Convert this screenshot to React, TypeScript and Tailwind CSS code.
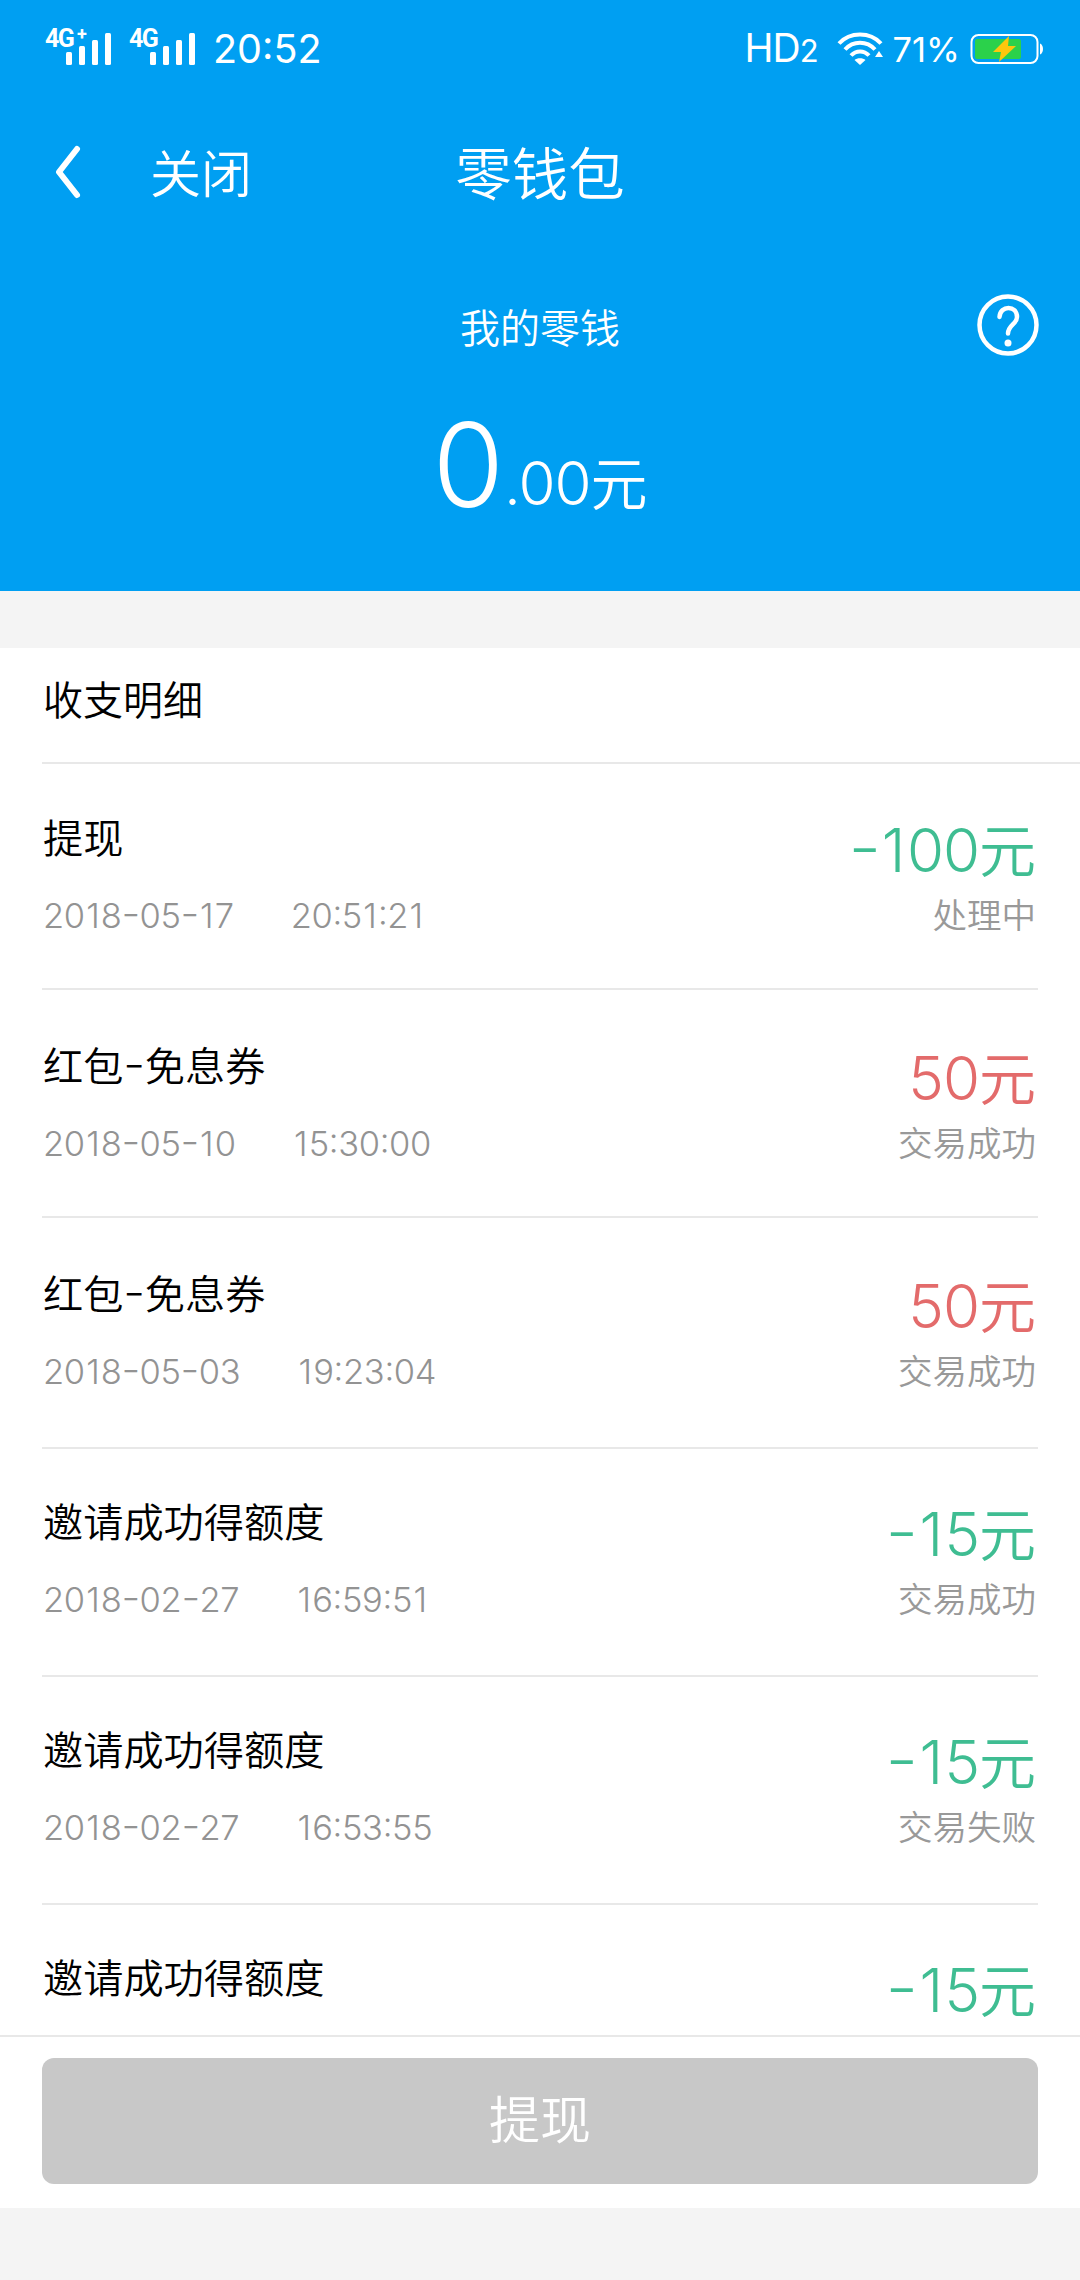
import { clsx } from "clsx";

interface RecordItem {
    title: string;
    date?: string;
    time?: string;
    amount: string;
    status?: string;
}

const records: RecordItem[] = [
    { title: "提现", date: "2018-05-17", time: "20:51:21", amount: "-100", status: "处理中" },
    { title: "红包-免息券", date: "2018-05-10", time: "15:30:00", amount: "50", status: "交易成功" },
    { title: "红包-免息券", date: "2018-05-03", time: "19:23:04", amount: "50", status: "交易成功" },
    { title: "邀请成功得额度", date: "2018-02-27", time: "16:59:51", amount: "-15", status: "交易成功" },
    { title: "邀请成功得额度", date: "2018-02-27", time: "16:53:55", amount: "-15", status: "交易失败" },
    { title: "邀请成功得额度", amount: "-15" },
];

// row heights alternate a little, the text keeps an even 228px rhythm
const rowSizes = [
    "h-[226px] pt-[47px]",
    "h-[228px] pt-[49px]",
    "h-[231px] pt-[49px]",
    "h-[228px] pt-[46px]",
    "h-[228px] pt-[46px]",
    "h-[131px] pt-[46px]",
];

// Widens hyphens, lifts them to the middle of the digits and gives "1" more room
function Spaced({ text }: { text: string }) {
    return (
        <span className="[font-feature-settings:'case']">
            {text.split("").map((char, i) => {
                if (char === "-") {
                    return <span key={i} className="mx-[0.04em] inline-block scale-x-[1.2]">-</span>
                }
                if (char === "1") {
                    return <span key={i} className="mx-[0.04em]">1</span>
                }
                return char
            })}
        </span>
    )
}

function Signal({ label, plus }: { label: string; plus?: boolean }) {
    return (
        <div className="relative h-[38px] w-[66px]">
            <span className="absolute left-[-1px] top-[-1px] text-[25px] leading-[20px] font-bold tracking-[-1.5px] font-['Roboto',sans-serif]">
                {label}
            </span>
            {plus && (
                <span className="absolute left-[31px] top-[-3px] text-[18px] leading-[14px] font-bold font-['Roboto',sans-serif]">+</span>
            )}
            <svg className="absolute left-[20px] top-[3px]" width="46" height="32" viewBox="0 0 46 32" fill="currentColor">
                <rect x="0" y="19" width="6" height="13" rx="1.5" />
                <rect x="13" y="13" width="6" height="19" rx="1.5" />
                <rect x="26" y="7" width="6" height="25" rx="1.5" />
                <rect x="39" y="0" width="6" height="32" rx="1.5" />
            </svg>
        </div>
    )
}

function StatusBar() {
    return (
        <div className="flex h-[97px] items-center justify-between pl-[46px] pr-[36px] font-normal text-white">
            <div className="flex items-center">
                <Signal label="4G" plus />
                <div className="w-[18px]" />
                <Signal label="4G" />
                <span className="ml-[17px] text-[39.5px] leading-[40px]">20:52</span>
            </div>
            <div className="flex items-center">
                <span className="text-[39px] leading-[42px] pt-[2px] tracking-[-1px]">HD<span className="text-[31px]">2</span></span>
                <svg className="ml-[19px]" width="48" height="34" viewBox="0 0 48 34" fill="none" stroke="currentColor" strokeWidth="4">
                    <path d="M2 11.5C13-0.5 33-0.5 44 11.5" />
                    <path d="M8 17.5C16 8.5 30 8.5 38 17.5" />
                    <path d="M14 23.5C19 18 27 18 32 23.5" />
                    <path d="M17.5 28C20 25.5 26 25.5 28.5 28L23 33Z" fill="currentColor" stroke="none" />
                    <path d="M42 19L46 25H38Z" fill="currentColor" stroke="none" />
                </svg>
                <span className="ml-[8px] pt-[2px] text-[34.5px] leading-[40px]">71%</span>
                <svg className="ml-[10px]" width="74" height="32" viewBox="0 0 74 32">
                    <rect x="1.5" y="2" width="66" height="28" rx="7" fill="none" stroke="#fff" strokeWidth="2" />
                    <rect x="5" y="6" width="46" height="20" rx="2" fill="#2bd14b" />
                    <path d="M70 10.5C74 12 74 20 70 21.5Z" fill="#fff" />
                    <path d="M39 3L23 19H31L29 29L46 13H38Z" fill="#fdc70c" />
                </svg>
            </div>
        </div>
    )
}

function NavBar() {
    return (
        <div className="grid h-[153px] grid-cols-3 items-center pb-[3px] text-white">
            <div className="flex items-center pl-[54px]">
                <svg width="28" height="54" viewBox="0 0 28 54" fill="none" stroke="currentColor" strokeWidth="6" strokeLinecap="round" strokeLinejoin="round">
                    <path d="M23 4L5 27L23 50" />
                </svg>
                <span className="ml-[68px] pt-[5px] text-[51px] leading-[60px]">关闭</span>
            </div>
            <h1 className="pt-[6px] text-center text-[56.5px] leading-[60px]">零钱包</h1>
        </div>
    )
}

function Balance() {
    return (
        <div className="relative flex h-[341px] flex-col items-center pt-[53px] text-white">
            <p className="text-[40px] leading-[52px]">我的零钱</p>
            <p className="mt-[50px] flex items-baseline text-[60px] leading-[120px]">
                <span className="text-[116px]">0</span>
                <span className="-translate-y-[2px] tracking-[-1px]">.00</span>
                <span className="-translate-y-[2px] text-[57px]">元</span>
            </p>
            <svg className="absolute right-[40px] top-[43px]" width="64" height="64" viewBox="0 0 64 64" fill="none" stroke="currentColor" strokeLinecap="round">
                <circle cx="32" cy="32" r="28.5" strokeWidth="4.5" />
                <path d="M23.5 24C24 12 41 12 41 24C41 31 32 32 32 40.5" strokeWidth="4.5" />
                <circle cx="32" cy="50" r="3.5" fill="currentColor" stroke="none" />
            </svg>
        </div>
    )
}

function RecordRow({ record, size }: { record: RecordItem; size: string }) {
    const outgoing = record.amount.startsWith("-")

    return (
        <li className={clsx("flex shrink-0 justify-between border-b-2 border-[#e8e8e8] last:border-b-0", size)}>
            <div className="pl-[1px]">
                <p className="text-[40.2px] leading-[56px] text-black"><Spaced text={record.title} /></p>
                {record.date && record.time && (
                    <p className="mt-[29px] flex gap-[57px] text-[34.5px] leading-[40px] tracking-[-0.35px] text-[#939393]">
                        <Spaced text={record.date} />
                        <Spaced text={record.time} />
                    </p>
                )}
            </div>
            <div className="pr-[2px] text-right">
                <p className={clsx("mt-[9px] text-[60px] leading-[60px] tracking-[-1px]", outgoing ? "text-[#3fbd92]" : "text-[#e36b6b]")}>
                    <Spaced text={record.amount} />
                    <span className="text-[57px] tracking-normal">元</span>
                </p>
                {record.status && (
                    <p className="mt-[14px] text-[34.5px] leading-[40px] text-[#999]">{record.status}</p>
                )}
            </div>
        </li>
    )
}

export default function App() {
    return (
        <div className="flex h-[2280px] w-[1080px] flex-col bg-[#f4f4f4] font-[350] font-['Inter','Noto_Sans_CJK_SC',sans-serif]">
            <header className="h-[591px] bg-[#009ff2]">
                <StatusBar />
                <NavBar />
                <Balance />
            </header>

            <main className="mt-[57px] flex h-[1387px] flex-col overflow-hidden bg-white">
                <h2 className="ml-[42px] h-[116px] shrink-0 border-b-2 border-[#e8e8e8] pl-[1px] pt-[25px] text-[40px] leading-[56px] text-black">
                    收支明细
                </h2>
                <ul className="mx-[42px] flex flex-col">
                    {records.map((record, i) => (
                        <RecordRow key={i} record={record} size={rowSizes[i]} />
                    ))}
                </ul>
            </main>

            <footer className="h-[173px] border-t-2 border-[#e8e8e8] bg-white px-[42px] pt-[21px]">
                <button className="h-[126px] w-full rounded-[12px] bg-[#c8c8c8] text-[51px] text-white">提现</button>
            </footer>
        </div>
    )
}
